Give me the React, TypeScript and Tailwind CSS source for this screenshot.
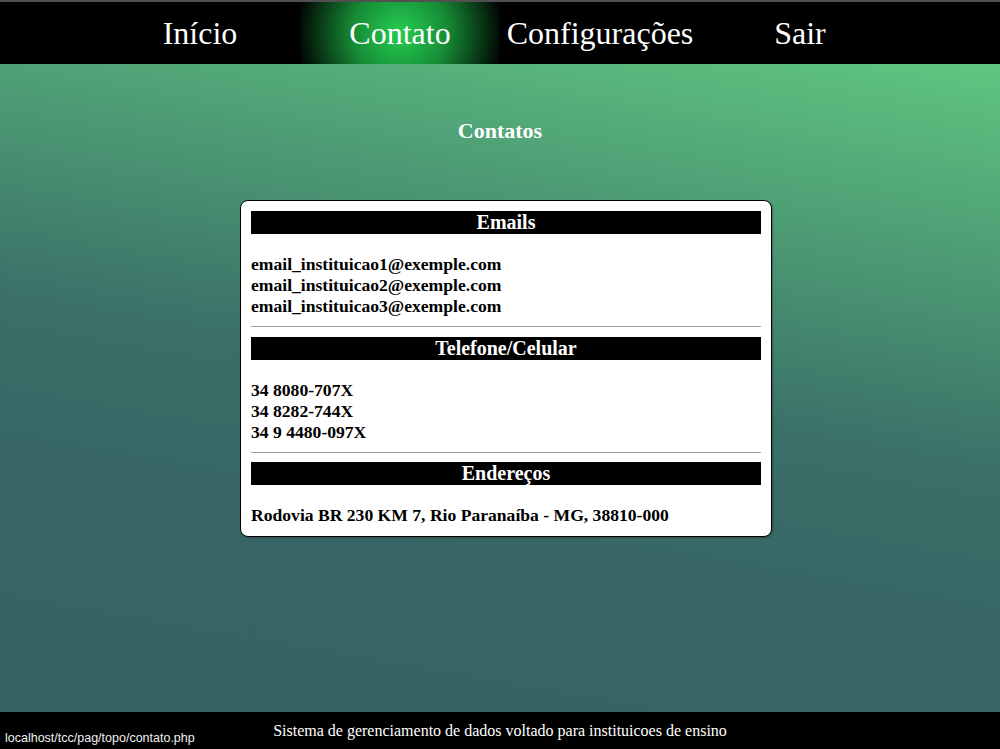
const navItems = [
  { label: 'Início', active: false },
  { label: 'Contato', active: true },
  { label: 'Configurações', active: false },
  { label: 'Sair', active: false },
];

const emails = [
  'email_instituicao1@exemple.com',
  'email_instituicao2@exemple.com',
  'email_instituicao3@exemple.com',
];

const phones = ['34 8080-707X', '34 8282-744X', '34 9 4480-097X'];

function SectionHeader({ title }: { title: string }) {
  return (
    <div className="h-[23px] bg-black text-white text-[20px] font-bold leading-[23px] text-center">
      {title}
    </div>
  );
}

export default function App() {
  return (
    <div className="relative min-h-screen flex flex-col font-['Liberation_Serif',serif]">
      <div className="h-[2px] bg-[#505050]" />
      <nav className="h-[62px] bg-black flex justify-center">
        {navItems.map((item) => (
          <a
            key={item.label}
            href="#"
            className={
              item.active
                ? 'w-[200px] h-full flex items-center justify-center text-white text-[32px] bg-[radial-gradient(circle,#26cd51_0%,#168c36_45%,#000_100%)]'
                : 'w-[200px] h-full flex items-center justify-center text-white text-[32px]'
            }
          >
            {item.label}
          </a>
        ))}
      </nav>

      <main className="flex-1 bg-[linear-gradient(190deg,#5fc680_0%,#3a6f68_50%,#376565_72%,#366464_100%)] pb-[40px]">
        <h1 className="pt-[54px] text-center text-white text-[22px] font-bold leading-[26px]">
          Contatos
        </h1>

        <div className="mt-[56px] ml-[240px] w-[532px] bg-white border border-black rounded-lg p-[10px] shadow-[1px_1px_2px_rgba(0,0,0,0.25)]">
          <SectionHeader title="Emails" />
          <div className="mt-[20px] text-[17.6px] font-bold leading-[21px] text-black">
            {emails.map((e) => (
              <div key={e}>{e}</div>
            ))}
          </div>
          <hr className="mt-[9px] mb-[10px] border-t border-[#a0a0a0]" />

          <SectionHeader title="Telefone/Celular" />
          <div className="mt-[20px] text-[17.6px] font-bold leading-[21px] text-black">
            {phones.map((p) => (
              <div key={p}>{p}</div>
            ))}
          </div>
          <hr className="mt-[9px] mb-[9px] border-t border-[#a0a0a0]" />

          <SectionHeader title="Endereços" />
          <div className="mt-[20px] text-[17.6px] font-bold leading-[21px] text-black">
            Rodovia BR 230 KM 7, Rio Paranaíba - MG, 38810-000
          </div>
        </div>
      </main>

      <footer className="h-[37px] bg-black flex items-center justify-center text-white text-[16px]">
        Sistema de gerenciamento de dados voltado para instituicoes de ensino
      </footer>

      <div className="absolute left-0 bottom-0 h-[20px] px-[5px] bg-black text-[#f0f0f0] text-[12.5px] leading-[18px] font-['Liberation_Sans',sans-serif]">
        localhost/tcc/pag/topo/contato.php
      </div>
    </div>
  );
}
